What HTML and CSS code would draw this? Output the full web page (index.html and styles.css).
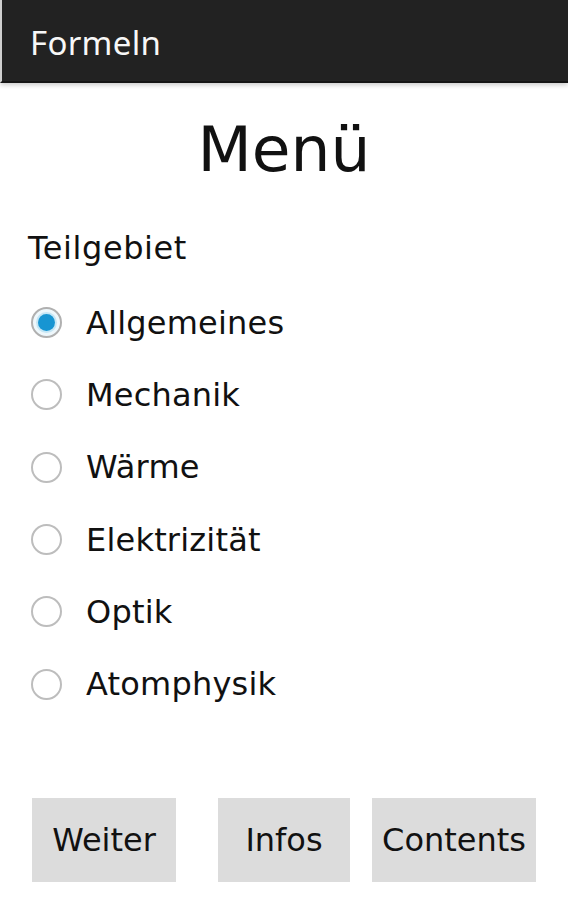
FILE: index.html
```html
<!DOCTYPE html>
<html lang="de">
<head>
<meta charset="utf-8">
<title>Formeln</title>
<link rel="stylesheet" href="styles.css">
</head>
<body>
<header class="appbar"><span class="appbar-title">Formeln</span></header>
<main class="content">
  <h1 class="title">Menü</h1>
  <div class="group-label">Teilgebiet</div>
  <ul class="radios">
    <li class="radio-row"><span class="radio checked"></span><span class="radio-label">Allgemeines</span></li>
    <li class="radio-row"><span class="radio"></span><span class="radio-label">Mechanik</span></li>
    <li class="radio-row"><span class="radio"></span><span class="radio-label">Wärme</span></li>
    <li class="radio-row"><span class="radio"></span><span class="radio-label">Elektrizität</span></li>
    <li class="radio-row"><span class="radio"></span><span class="radio-label">Optik</span></li>
    <li class="radio-row"><span class="radio"></span><span class="radio-label">Atomphysik</span></li>
  </ul>
  <div class="buttons">
    <div class="btn btn-weiter">Weiter</div>
    <div class="btn btn-infos">Infos</div>
    <div class="btn btn-contents">Contents</div>
  </div>
</main>
</body>
</html>
```
FILE: styles.css
```css
html, body {
  margin: 0;
  padding: 0;
  background: #ffffff;
}
body {
  width: 568px;
  height: 900px;
  overflow: hidden;
  font-family: "DejaVu Sans", sans-serif;
  color: #111111;
}
.appbar {
  box-sizing: border-box;
  height: 83px;
  background: #222222;
  border-left: 2px solid #cfcfcf;
  border-bottom: 2px solid #141414;
  box-shadow: 0 2px 5px rgba(0, 0, 0, 0.22);
  padding: 20px 0 0 28px;
  position: relative;
  z-index: 1;
}
.appbar-title {
  font-family: "Noto Sans", "Open Sans", sans-serif;
  font-size: 33px;
  line-height: 45px;
  letter-spacing: 0.3px;
  color: #f7f7f7;
  display: block;
}
.content {
  display: flex;
  flex-direction: column;
}
.title {
  margin: 30px 0 0 0;
  font-size: 63px;
  font-weight: normal;
  line-height: 74px;
  text-align: center;
  color: #111111;
}
.group-label {
  margin-top: 42px;
  padding-left: 28px;
  font-size: 32px;
  line-height: 38px;
  letter-spacing: 0.6px;
}
.radios {
  list-style: none;
  margin: 19.5px 0 0 0;
  padding: 0 0 0 31px;
}
.radio-row {
  height: 72.3px;
  display: flex;
  align-items: center;
  gap: 24px;
}
.radio {
  box-sizing: border-box;
  width: 31px;
  height: 31px;
  border-radius: 50%;
  border: 2px solid #bdbdbd;
  background: #ffffff;
  display: flex;
  align-items: center;
  justify-content: center;
  flex: none;
}
.radio.checked {
  border-color: #b0b0b0;
  background: #eef7fb;
}
.radio.checked::after {
  content: "";
  width: 17px;
  height: 17px;
  border-radius: 50%;
  background: #1795d2;
  box-shadow: 0 0 0 2px #c4e6f5;
}
.radio-label {
  font-size: 32px;
  line-height: 38px;
  letter-spacing: 0.2px;
}
.buttons {
  display: flex;
  margin-top: 77.5px;
  padding-left: 32px;
}
.btn {
  height: 84px;
  background: #dcdcdc;
  display: flex;
  align-items: center;
  justify-content: center;
  font-size: 32px;
  line-height: 38px;
  color: #111111;
}
.btn-weiter { width: 144px; }
.btn-infos { width: 132px; margin-left: 42px; }
.btn-contents { width: 164px; margin-left: 22px; }
```
